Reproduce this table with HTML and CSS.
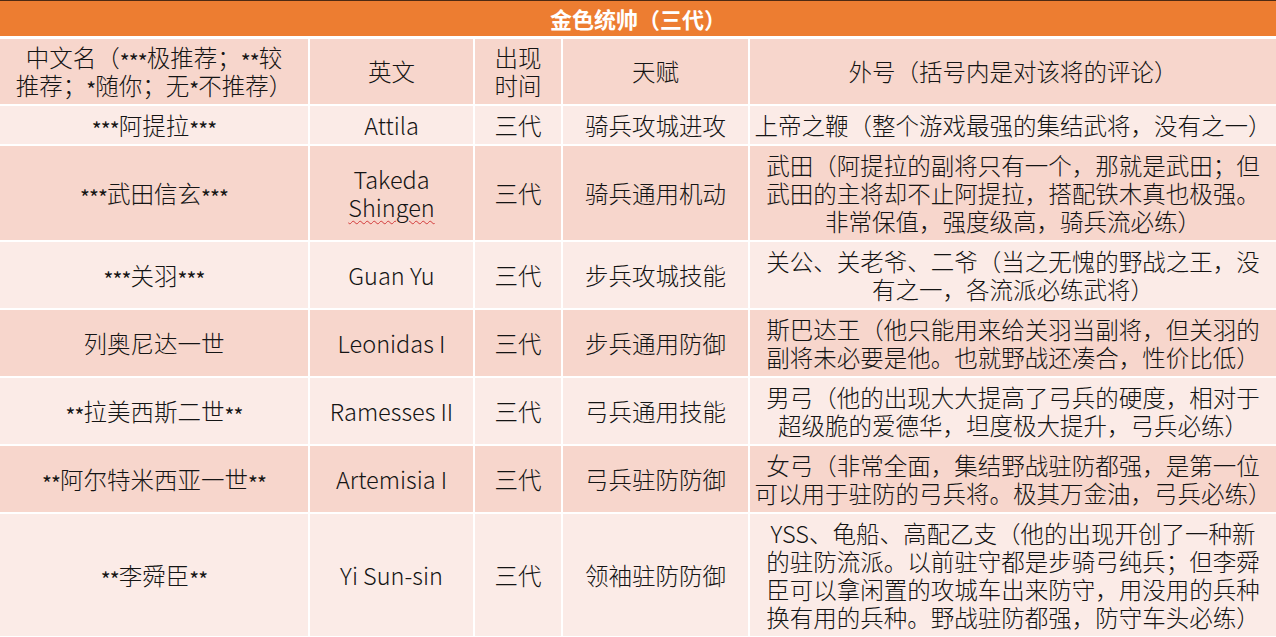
FILE: index.html
```html
<!DOCTYPE html>
<html lang="zh-CN">
<head>
<meta charset="utf-8">
<title>金色统帅（三代）</title>
<link rel="stylesheet" href="styles.css">
</head>
<body>
<div class="sheet">
<table class="gen-table">
  <colgroup>
    <col class="c-cn">
    <col class="c-en">
    <col class="c-time">
    <col class="c-talent">
    <col class="c-note">
  </colgroup>
  <thead>
    <tr class="title-row"><th colspan="5">金色统帅（三代）</th></tr>
    <tr class="head-row">
      <td>中文名（<span class="ast">***</span>极推荐；<span class="ast">**</span>较<br>推荐；<span class="ast">*</span>随你；无<span class="ast">*</span>不推荐）</td>
      <td>英文</td>
      <td>出现<br>时间</td>
      <td>天赋</td>
      <td>外号（括号内是对该将的评论）</td>
    </tr>
  </thead>
  <tbody>
    <tr class="light">
      <td><span class="ast">***</span>阿提拉<span class="ast">***</span></td>
      <td>Attila</td>
      <td>三代</td>
      <td>骑兵攻城进攻</td>
      <td class="note">上帝之鞭（整个游戏最强的集结武将，没有之一）</td>
    </tr>
    <tr class="dark">
      <td><span class="ast">***</span>武田信玄<span class="ast">***</span></td>
      <td>Takeda<br><span class="spell">Shingen</span></td>
      <td>三代</td>
      <td>骑兵通用机动</td>
      <td class="note">武田（阿提拉的副将只有一个，那就是武田；但<br>武田的主将却不止阿提拉，搭配铁木真也极强。<br>非常保值，强度级高，骑兵流必练）</td>
    </tr>
    <tr class="light">
      <td><span class="ast">***</span>关羽<span class="ast">***</span></td>
      <td>Guan Yu</td>
      <td>三代</td>
      <td>步兵攻城技能</td>
      <td class="note">关公、关老爷、二爷（当之无愧的野战之王，没<br>有之一，各流派必练武将）</td>
    </tr>
    <tr class="dark">
      <td>列奥尼达一世</td>
      <td>Leonidas I</td>
      <td>三代</td>
      <td>步兵通用防御</td>
      <td class="note">斯巴达王（他只能用来给关羽当副将，但关羽的<br>副将未必要是他。也就野战还凑合，性价比低）</td>
    </tr>
    <tr class="light">
      <td><span class="ast">**</span>拉美西斯二世<span class="ast">**</span></td>
      <td>Ramesses II</td>
      <td>三代</td>
      <td>弓兵通用技能</td>
      <td class="note">男弓（他的出现大大提高了弓兵的硬度，相对于<br>超级脆的爱德华，坦度极大提升，弓兵必练）</td>
    </tr>
    <tr class="dark">
      <td><span class="ast">**</span>阿尔特米西亚一世<span class="ast">**</span></td>
      <td>Artemisia I</td>
      <td>三代</td>
      <td>弓兵驻防防御</td>
      <td class="note">女弓（非常全面，集结野战驻防都强，是第一位<br>可以用于驻防的弓兵将。极其万金油，弓兵必练）</td>
    </tr>
    <tr class="light">
      <td><span class="ast">**</span>李舜臣<span class="ast">**</span></td>
      <td>Yi Sun-sin</td>
      <td>三代</td>
      <td>领袖驻防防御</td>
      <td class="note">YSS、龟船、高配乙支（他的出现开创了一种新<br>的驻防流派。以前驻守都是步骑弓纯兵；但李舜<br>臣可以拿闲置的攻城车出来防守，用没用的兵种<br>换有用的兵种。野战驻防都强，防守车头必练）</td>
    </tr>
  </tbody>
</table>
</div>
</body>
</html>
```

FILE: styles.css
```css
html, body {
  margin: 0;
  padding: 0;
  background: #fbebe7;
}

.sheet {
  width: 1276px;
  height: 637px;
  overflow: hidden;
  border-top: 1px solid #4e2a12;
  box-sizing: border-box;
}

.gen-table {
  width: 1276px;
  table-layout: fixed;
  border-collapse: collapse;
  font-family: "Noto Sans CJK SC", "Noto Sans", sans-serif;
  font-size: 23.5px;
  font-weight: 300;
  line-height: 28px;
  color: #141414;
}

.c-cn { width: 309px; }
.c-en { width: 165px; }
.c-time { width: 88px; }
.c-talent { width: 187px; }
.c-note { width: 527px; }

.title-row th {
  background: #ed7d31;
  color: #ffffff;
  font-size: 22px;
  font-weight: 700;
  line-height: 35px;
  height: 35px;
  padding: 0;
  text-align: center;
  border-bottom: 3px solid #ffffff;
}

.gen-table td {
  border: 2px solid #ffffff;
  padding: 5px 2px;
  text-align: center;
  vertical-align: middle;
  white-space: nowrap;
  overflow: visible;
}

.gen-table td:first-child { border-left: none; }
.gen-table td:last-child { border-right: none; }

.head-row td {
  background: #f7d6cc;
  border-top: none;
  padding-top: 4px;
  padding-bottom: 5px;
}

.dark td { background: #f7d6cc; }
.light td { background: #fbebe7; }

.ast {
  font-size: 0.9em;
  font-weight: 400;
  line-height: 0;
  position: relative;
  top: 0.12em;
  letter-spacing: -0.04em;
}

.spell {
  text-decoration: underline wavy #d23a3a;
  text-decoration-thickness: 1px;
  text-underline-offset: 3px;
}
```
